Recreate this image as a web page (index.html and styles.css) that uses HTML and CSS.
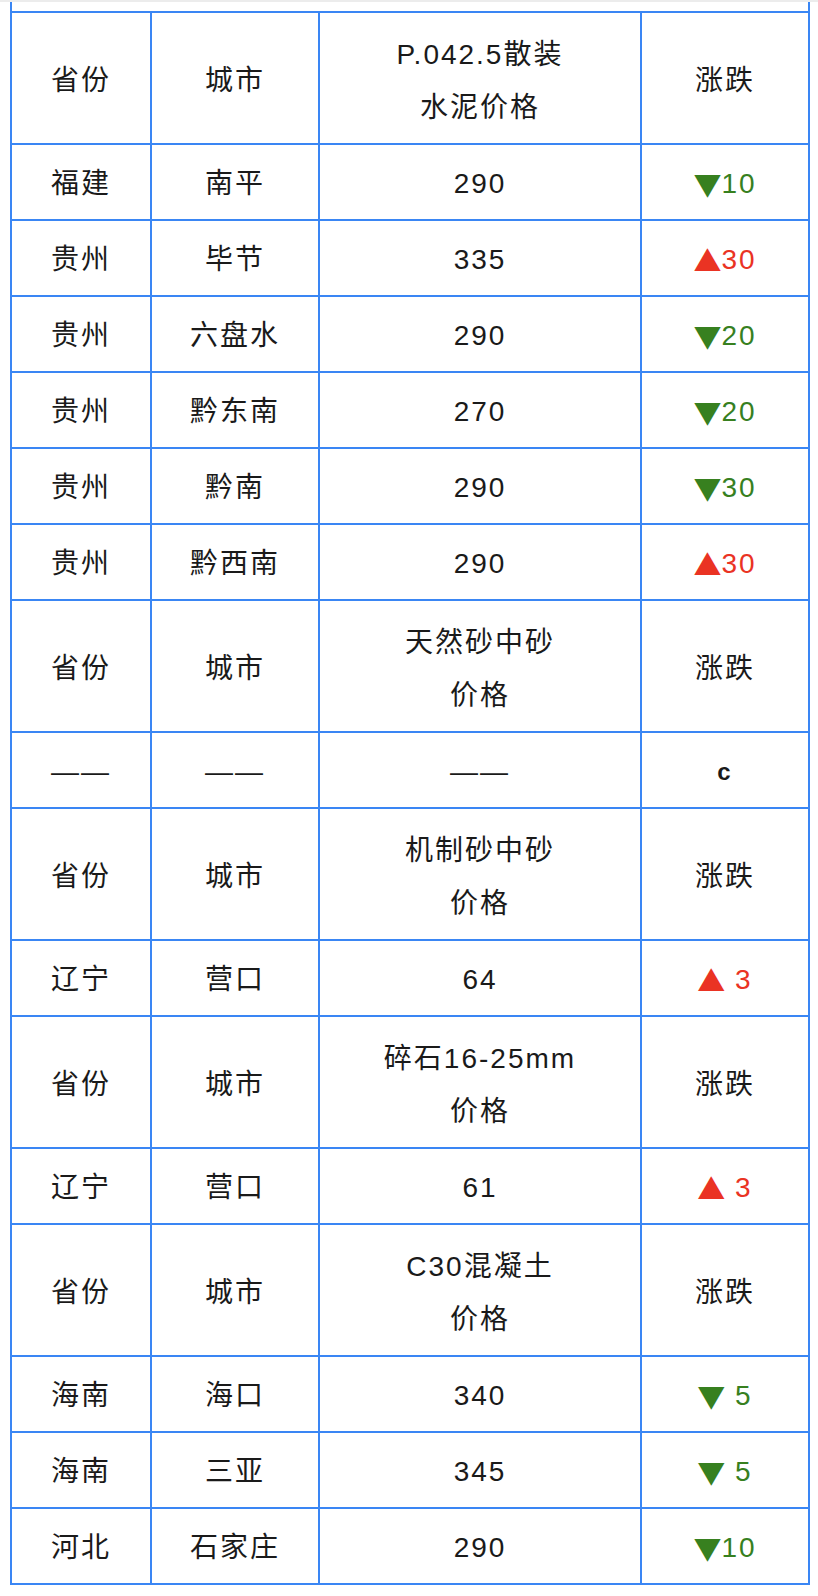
FILE: index.html
```html
<!DOCTYPE html>
<html lang="zh-CN">
<head>
<meta charset="utf-8">
<title>价格表</title>
<link rel="stylesheet" href="styles.css">
</head>
<body>
<div class="topbar"></div>
<div class="stub"></div>
<div class="grid">
  <div class="cell two">省份</div><div class="cell two">城市</div><div class="cell two"><span class="lines">P.042.5散装<br>水泥价格</span></div><div class="cell two">涨跌</div>

  <div class="cell">福建</div><div class="cell">南平</div><div class="cell">290</div><div class="cell down"><span class="arrow">▼</span>10</div>
  <div class="cell">贵州</div><div class="cell">毕节</div><div class="cell">335</div><div class="cell up"><span class="arrow">▲</span>30</div>
  <div class="cell">贵州</div><div class="cell">六盘水</div><div class="cell">290</div><div class="cell down"><span class="arrow">▼</span>20</div>
  <div class="cell">贵州</div><div class="cell">黔东南</div><div class="cell">270</div><div class="cell down"><span class="arrow">▼</span>20</div>
  <div class="cell">贵州</div><div class="cell">黔南</div><div class="cell">290</div><div class="cell down"><span class="arrow">▼</span>30</div>
  <div class="cell">贵州</div><div class="cell">黔西南</div><div class="cell">290</div><div class="cell up"><span class="arrow">▲</span>30</div>

  <div class="cell two">省份</div><div class="cell two">城市</div><div class="cell two"><span class="lines">天然砂中砂<br>价格</span></div><div class="cell two">涨跌</div>
  <div class="cell">——</div><div class="cell">——</div><div class="cell">——</div><div class="cell small">c</div>

  <div class="cell two">省份</div><div class="cell two">城市</div><div class="cell two"><span class="lines">机制砂中砂<br>价格</span></div><div class="cell two">涨跌</div>
  <div class="cell">辽宁</div><div class="cell">营口</div><div class="cell">64</div><div class="cell up"><span class="arrow">▲</span>&nbsp;3</div>

  <div class="cell two">省份</div><div class="cell two">城市</div><div class="cell two"><span class="lines">碎石16-25mm<br>价格</span></div><div class="cell two">涨跌</div>
  <div class="cell">辽宁</div><div class="cell">营口</div><div class="cell">61</div><div class="cell up"><span class="arrow">▲</span>&nbsp;3</div>

  <div class="cell two">省份</div><div class="cell two">城市</div><div class="cell two"><span class="lines">C30混凝土<br>价格</span></div><div class="cell two">涨跌</div>
  <div class="cell">海南</div><div class="cell">海口</div><div class="cell">340</div><div class="cell down"><span class="arrow">▼</span>&nbsp;5</div>
  <div class="cell">海南</div><div class="cell">三亚</div><div class="cell">345</div><div class="cell down"><span class="arrow">▼</span>&nbsp;5</div>
  <div class="cell">河北</div><div class="cell">石家庄</div><div class="cell">290</div><div class="cell down"><span class="arrow">▼</span>10</div>
</div>
</body>
</html>
```

FILE: styles.css
```css
* { box-sizing: border-box; }
html, body {
  margin: 0;
  padding: 0;
  background: #ffffff;
}
body {
  font-family: "Liberation Sans", "Noto Sans CJK SC", sans-serif;
  color: #1a1a1a;
}
.topbar {
  height: 2px;
  background: #ececec;
}
.stub {
  height: 9px;
  margin: 0 8px 0 10px;
  border-left: 2px solid #3a86f4;
  border-right: 2px solid #3a86f4;
}
.grid {
  display: grid;
  grid-template-columns: 140px 168px 322px 168px;
  width: 800px;
  margin: 0 8px 0 10px;
  border-left: 2px solid #3a86f4;
  border-top: 2px solid #3a86f4;
}
.cell {
  display: flex;
  align-items: center;
  justify-content: center;
  height: 76px;
  border-right: 2px solid #3a86f4;
  border-bottom: 2px solid #3a86f4;
  padding: 4px 4px 0;
  text-align: center;
  font-size: 28px;
  line-height: 56px;
  letter-spacing: 2px;
  white-space: nowrap;
  overflow: hidden;
}
.cell.two {
  height: 132px;
  padding-top: 6px;
}
.lines {
  display: block;
  text-align: center;
  line-height: 53px;
}
.arrow {
  font-family: "Noto Sans CJK SC", sans-serif;
  letter-spacing: 0;
}
.up { color: #ea3323; }
.down { color: #37801f; }
.small { font-size: 24px; font-weight: bold; }
```
